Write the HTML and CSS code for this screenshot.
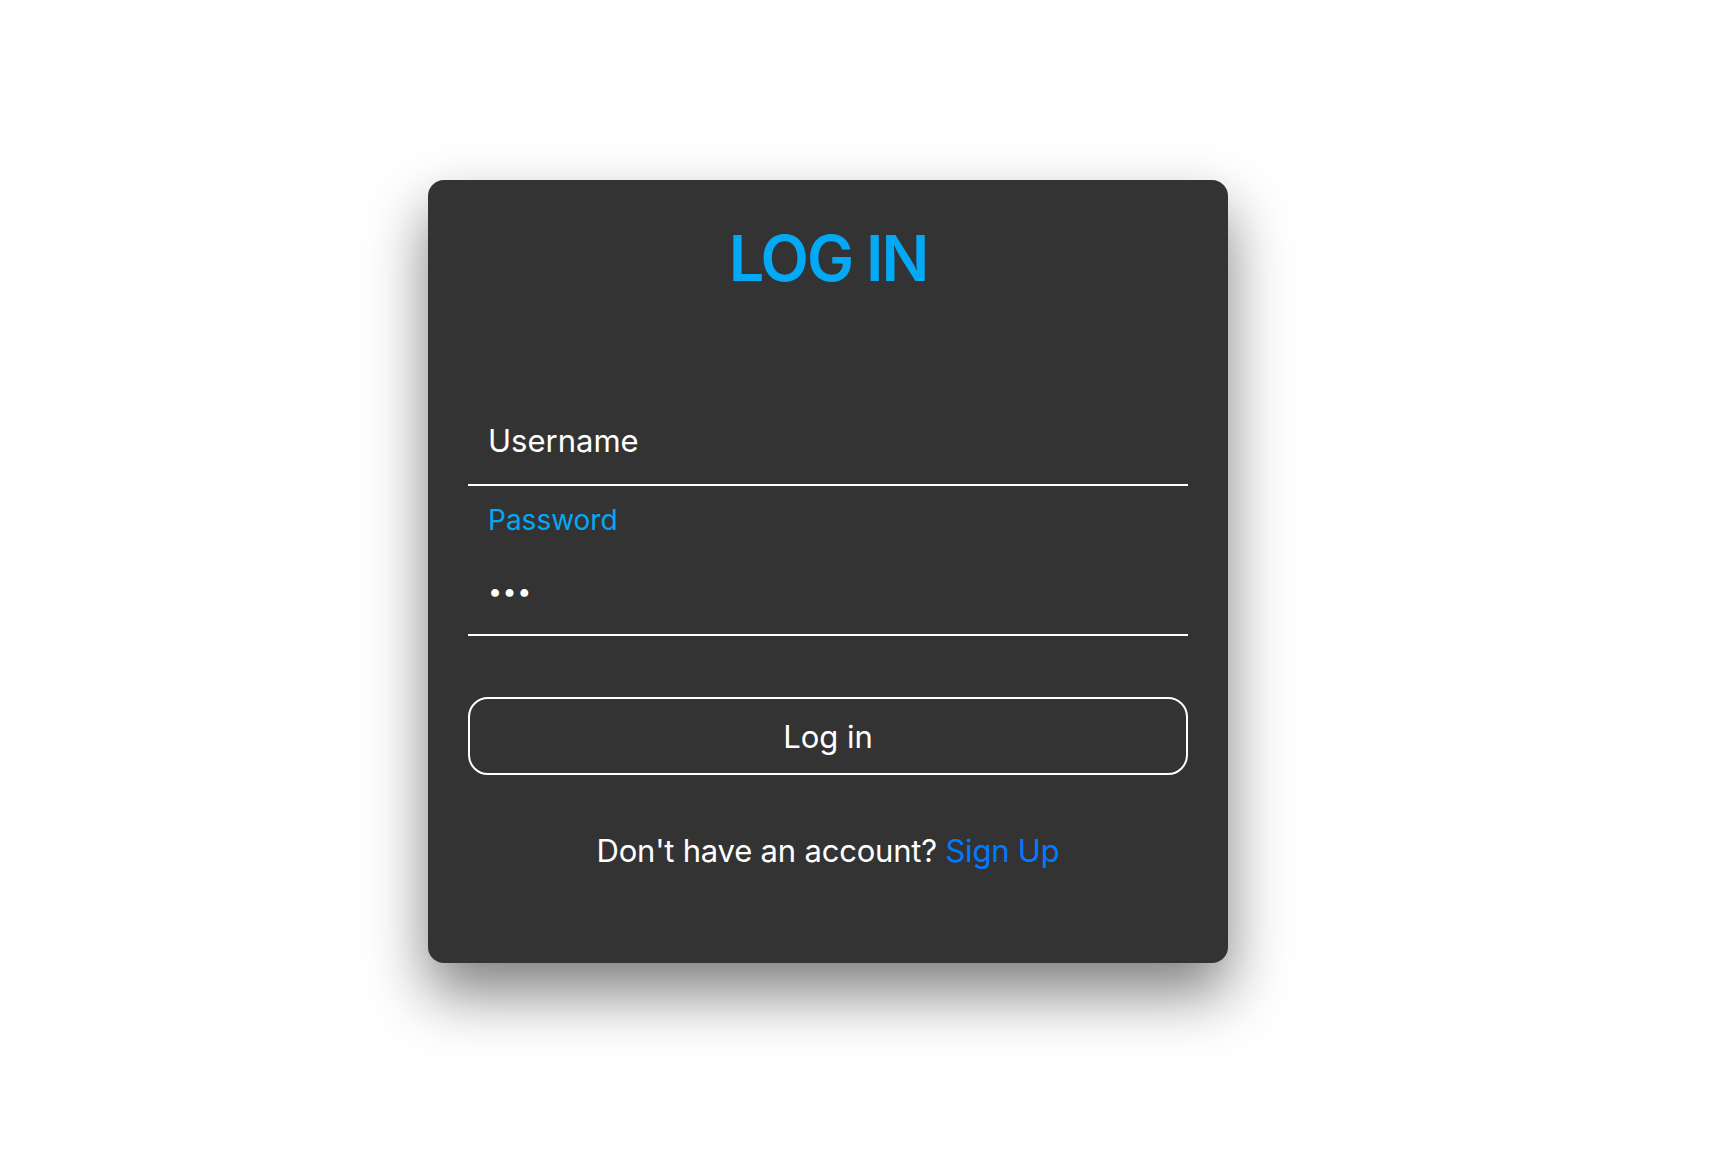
FILE: index.html
```html
<!DOCTYPE html>
<html lang="en">
<head>
<meta charset="utf-8">
<title>Log in</title>
<link rel="stylesheet" href="styles.css">
</head>
<body>
<main class="page">
  <form class="card">
    <h1 class="title">LOG IN</h1>
    <div class="field">
      <input class="input" type="text" id="username">
      <label class="label label-rest" for="username">Username</label>
    </div>
    <div class="field">
      <label class="label label-float" for="password">Password</label>
      <input class="input input-password" type="password" id="password" value="abc">
    </div>
    <button class="btn" type="button">Log in</button>
    <p class="signup">Don't have an account? <a class="signup-link" href="#">Sign Up</a></p>
  </form>
</main>
</body>
</html>
```
FILE: styles.css
```css
* { box-sizing: border-box; }
html, body { margin: 0; background: #ffffff; }
body { font-family: Inter, "Noto Sans", sans-serif; }
.page { min-height: 100vh; padding: 180px 0 0 428px; }
.card {
  width: 800px;
  padding: 40px 40px 92px;
  background: #333333;
  border-radius: 16px;
  box-shadow: 0 30px 60px rgba(0, 0, 0, 0.5);
  display: flex;
  flex-direction: column;
}
.title {
  margin: 0;
  font-size: 63px;
  line-height: 76px;
  font-weight: 600;
  letter-spacing: -2px;
  color: #03a9f4;
  text-align: center;
}
.field {
  position: relative;
  padding-top: 62px;
  border-bottom: 2px solid #ffffff;
}
.title + .field { margin-top: 40px; }
.input {
  display: block;
  width: 100%;
  height: 86px;
  padding: 0 20px;
  border: none;
  outline: none;
  background: transparent;
  color: #ffffff;
  font-family: inherit;
  font-size: 31px;
}
.input-password { font-size: 25px; letter-spacing: 0.5px; padding-left: 20px; }
.label {
  position: absolute;
  left: 20px;
  pointer-events: none;
}
.label-rest {
  top: 62px;
  line-height: 86px;
  font-size: 31px;
  color: #ffffff;
}
.label-float {
  top: 16px;
  line-height: 36px;
  font-size: 28px;
  color: #03a9f4;
}
.btn {
  margin-top: 61px;
  height: 78px;
  border: 2px solid #ffffff;
  border-radius: 20px;
  background: transparent;
  color: #ffffff;
  font-family: inherit;
  font-size: 31px;
  cursor: pointer;
}
.signup {
  margin: 56px 0 0;
  line-height: 40px;
  font-size: 31px;
  letter-spacing: -0.2px;
  color: #ffffff;
  text-align: center;
}
.signup-link { color: #007bff; text-decoration: none; }
```
